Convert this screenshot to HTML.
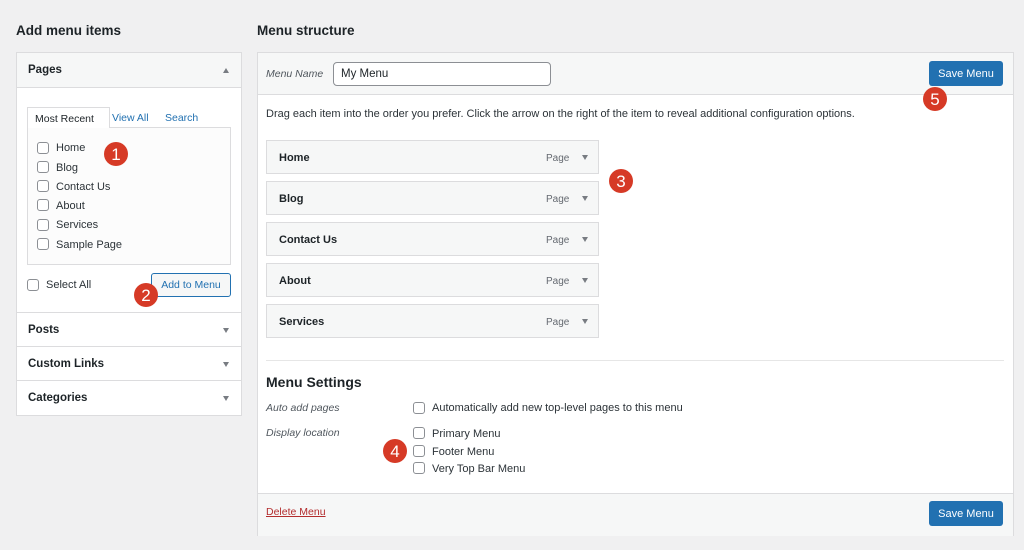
<!DOCTYPE html>
<html><head><meta charset="utf-8"><style>
*{box-sizing:border-box;margin:0;padding:0}
body{width:1024px;height:550px;background:#f0f0f1;font-family:"Liberation Sans",sans-serif;color:#1d2327;position:relative;overflow:hidden;font-size:11px}
.a{position:absolute}
h2{position:absolute;font-size:13.5px;font-weight:bold}
.box{position:absolute;background:#fff;border:1px solid #dcdcde}
.hdr{position:absolute;left:0;right:0;background:#f6f7f7;border-bottom:1px solid #dcdcde;font-weight:bold;font-size:11.5px;padding-left:11px}
.sec{position:absolute;left:17px;width:224px;height:35px;line-height:34px;background:#fff;border-top:1px solid #dcdcde;font-weight:bold;font-size:11.5px;padding-left:11px}
.cb{position:absolute;width:12px;height:12px;border:1px solid #8c8f94;border-radius:3px;background:#fff}
.tri{position:absolute;width:0;height:0;border-left:3.5px solid transparent;border-right:3.5px solid transparent}
.dn{border-top:5px solid #787c82}
.up{border-bottom:5px solid #787c82}
.item{position:absolute;left:266px;width:333px;height:34px;background:#f6f7f7;border:1px solid #dcdcde;font-weight:bold;font-size:11px;padding:11px 0 0 12px}
.item span{position:absolute;left:279px;top:12px;font-weight:normal;color:#646970;font-size:10px}
.item i{position:absolute;left:315px;top:14px}
.btn{position:absolute;background:#2271b1;color:#fff;border-radius:3px;font-size:11px;text-align:center;line-height:26px;width:74px;height:25px}
.badge{position:absolute;width:24px;height:24px;border-radius:50%;background:#d63a26;color:#fff;font-size:17px;text-align:center;line-height:26px}
.lab{position:absolute;font-size:11px;color:#2c3338}
.it{position:absolute;font-style:italic;color:#50575e;font-size:10.5px}
</style></head><body>
<h2 style="left:16px;top:23px">Add menu items</h2>
<h2 style="left:257px;top:23px">Menu structure</h2>

<div class="box" style="left:16px;top:52px;width:226px;height:364px">
 <div class="hdr" style="top:0;height:35px;line-height:34px">Pages<i class="tri up" style="right:12px;top:15px"></i></div>
 <div class="a" style="left:10px;top:54px;width:83px;height:21px;border:1px solid #dcdcde;border-bottom:none;background:#fff;z-index:2;font-size:10.5px;padding:5px 0 0 7px">Most Recent</div>
 <div class="a" style="left:95px;top:59px;color:#2271b1;font-size:10.5px">View All</div>
 <div class="a" style="left:148px;top:59px;color:#2271b1;font-size:10.5px">Search</div>
 <div class="a" style="left:10px;top:74px;width:204px;height:138px;border:1px solid #dcdcde;background:#fcfcfc"></div>
</div>
<div class="cb" style="left:37px;top:142px"></div><div class="lab" style="left:56px;top:142px">Home</div>
<div class="cb" style="left:37px;top:161px"></div><div class="lab" style="left:56px;top:162px">Blog</div>
<div class="cb" style="left:37px;top:180px"></div><div class="lab" style="left:56px;top:181px">Contact Us</div>
<div class="cb" style="left:37px;top:199px"></div><div class="lab" style="left:56px;top:200px">About</div>
<div class="cb" style="left:37px;top:219px"></div><div class="lab" style="left:56px;top:219px">Services</div>
<div class="cb" style="left:37px;top:238px"></div><div class="lab" style="left:56px;top:239px">Sample Page</div>
<div class="cb" style="left:27px;top:279px"></div><div class="lab" style="left:46px;top:279px">Select All</div>
<div class="a" style="left:151px;top:273px;width:80px;height:24px;border:1px solid #2271b1;border-radius:3px;background:#f6f7f7;color:#2271b1;font-size:10.5px;text-align:center;line-height:22px">Add to Menu</div>
<div class="sec" style="top:312px">Posts<i class="tri dn" style="right:12px;top:15px"></i></div>
<div class="sec" style="top:346px">Custom Links<i class="tri dn" style="right:12px;top:15px"></i></div>
<div class="sec" style="top:380px">Categories<i class="tri dn" style="right:12px;top:15px"></i></div>

<div class="box" style="left:257px;top:52px;width:757px;height:484px">
 <div class="hdr" style="top:0;height:42px"></div>
 <div class="hdr" style="top:440px;height:43px;border-top:1px solid #dcdcde;border-bottom:none"></div>
</div>
<div class="it" style="left:266px;top:68px">Menu Name</div>
<div class="a" style="left:333px;top:62px;width:218px;height:24px;border:1px solid #8c8f94;border-radius:4px;background:#fff;font-size:11.5px;padding:5px 0 0 7px">My Menu</div>
<div class="btn" style="left:929px;top:61px">Save Menu</div>
<div class="lab" style="left:266px;top:108px;font-size:11px">Drag each item into the order you prefer. Click the arrow on the right of the item to reveal additional configuration options.</div>
<div class="item" style="top:140px">Home<span>Page</span><i class="tri dn"></i></div>
<div class="item" style="top:181px">Blog<span>Page</span><i class="tri dn"></i></div>
<div class="item" style="top:222px">Contact Us<span>Page</span><i class="tri dn"></i></div>
<div class="item" style="top:263px">About<span>Page</span><i class="tri dn"></i></div>
<div class="item" style="top:304px">Services<span>Page</span><i class="tri dn"></i></div>
<div class="a" style="left:266px;top:360px;width:738px;height:1px;background:#e6e6e6"></div>
<div class="a" style="left:266px;top:374px;font-size:14px;font-weight:bold">Menu Settings</div>
<div class="it" style="left:266px;top:402px">Auto add pages</div>
<div class="it" style="left:266px;top:427px">Display location</div>
<div class="cb" style="left:413px;top:402px"></div><div class="lab" style="left:432px;top:402px">Automatically add new top-level pages to this menu</div>
<div class="cb" style="left:413px;top:427px"></div><div class="lab" style="left:432px;top:428px">Primary Menu</div>
<div class="cb" style="left:413px;top:445px"></div><div class="lab" style="left:432px;top:446px">Footer Menu</div>
<div class="cb" style="left:413px;top:462px"></div><div class="lab" style="left:432px;top:463px">Very Top Bar Menu</div>
<div class="a" style="left:266px;top:506px;color:#b32d2e;text-decoration:underline;font-size:10.5px">Delete Menu</div>
<div class="btn" style="left:929px;top:501px">Save Menu</div>

<div class="badge" style="left:104px;top:142px">1</div>
<div class="badge" style="left:134px;top:283px">2</div>
<div class="badge" style="left:609px;top:169px">3</div>
<div class="badge" style="left:383px;top:439px">4</div>
<div class="badge" style="left:923px;top:87px">5</div>
</body></html>
